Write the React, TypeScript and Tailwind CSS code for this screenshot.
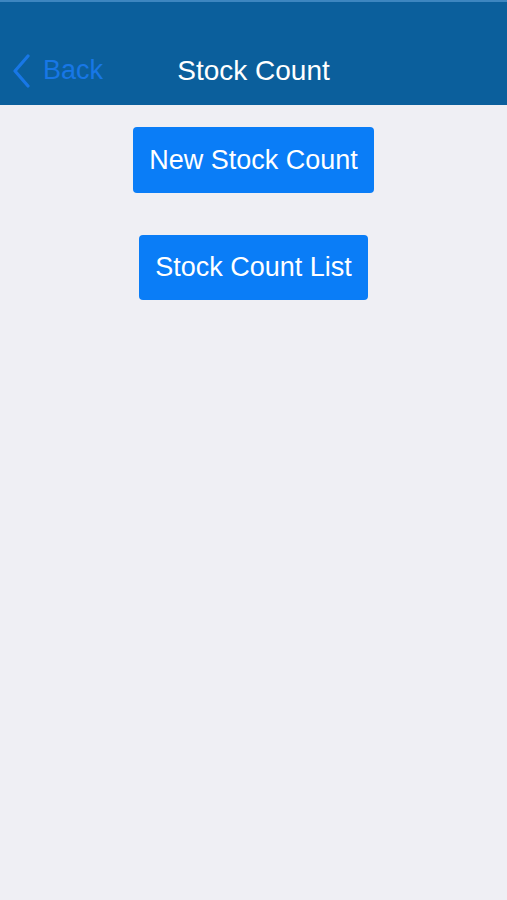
export default function App() {
  return (
    <div className="min-h-[900px] w-full bg-[#efeff4] font-['Liberation_Sans',_Arial,_sans-serif]">
      <header className="h-[105px] bg-[#0b5f9c] border-t-2 border-[#3d86c0] pt-[35px]">
        <div className="relative flex h-[67px] items-center justify-center">
          <button className="absolute left-[12px] top-0 flex h-full items-center gap-[12px] text-[#1877e6]">
            <svg width="19" height="34" viewBox="0 0 19 34" fill="none" stroke="currentColor" strokeWidth="3.2" strokeLinecap="round" strokeLinejoin="round">
              <path d="M16 2 L3 17 L16 32" />
            </svg>
            <span className="text-[27px] leading-none">Back</span>
          </button>
          <h1 className="text-[28px] leading-none font-normal text-white">Stock Count</h1>
        </div>
      </header>
      <main className="flex flex-col items-center gap-[42px] pt-[22px]">
        <button className="h-[66px] rounded-[4px] bg-[#0a7df7] px-4 text-[27px] leading-none text-white">
          New Stock Count
        </button>
        <button className="h-[65px] rounded-[4px] bg-[#0a7df7] px-4 text-[27px] leading-none text-white">
          Stock Count List
        </button>
      </main>
    </div>
  );
}
